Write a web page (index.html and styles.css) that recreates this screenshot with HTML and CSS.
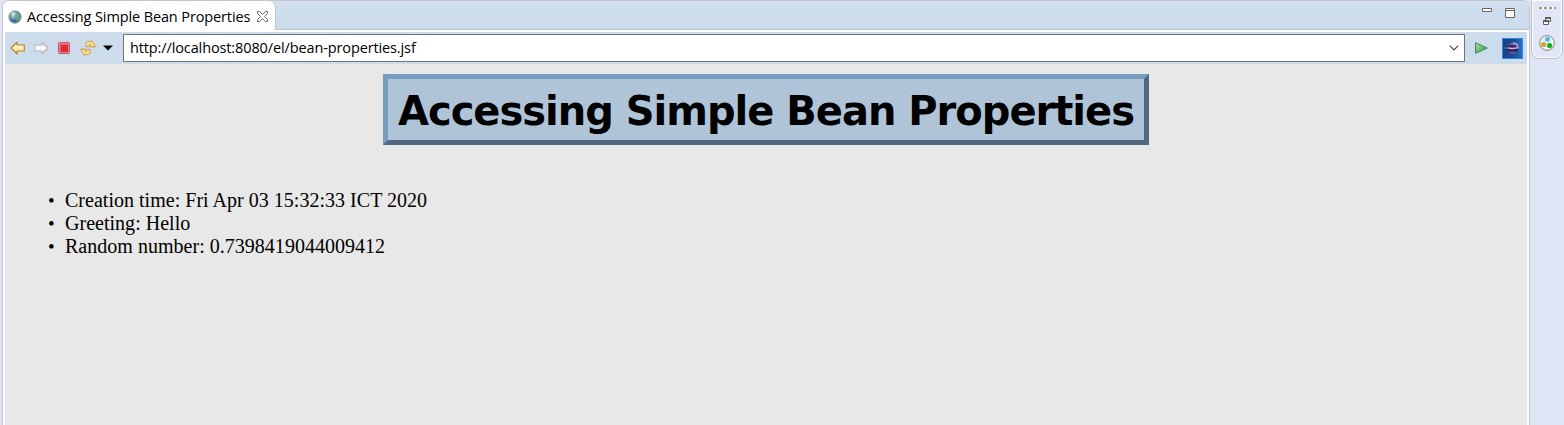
FILE: index.html
```html
<!DOCTYPE html>
<html lang="en">
<head>
<meta charset="utf-8">
<title>Accessing Simple Bean Properties</title>
<link rel="stylesheet" href="styles.css">
</head>
<body>
<div class="workbench">
  <main class="editor">
    <header class="tabs">
      <div class="tab">
        <svg class="globe" width="14" height="14" viewBox="0 0 14 14"><defs><radialGradient id="sea" cx=".35" cy=".3"><stop offset="0" stop-color="#d5ebf5"/><stop offset=".6" stop-color="#6ba3c4"/><stop offset="1" stop-color="#3b6c99"/></radialGradient></defs><circle cx="7" cy="7" r="6.2" fill="url(#sea)" stroke="#8795a3" stroke-width=".8"/><path d="M2 4 5 1.5l2 .5-1 2-2 1-1 3-2-1zM8 4l3-1 2 3-1 4-3 2-1-3-2-2z" fill="#78a678" opacity=".8"/><path d="m3 3 3-1 1 2-3 2z" fill="#e1f1ee" opacity=".7"/></svg>
        <span class="tab-title">Accessing Simple Bean Properties</span>
        <svg class="close" width="11" height="11" viewBox="0 0 11 11"><path d="M.5.5h2l3 3 3-3h2v2l-3 3 3 3v2h-2l-3-3-3 3h-2v-2l3-3-3-3z" fill="#fff" stroke="#6b6b6b"/></svg>
      </div>
      <div class="pane-actions">
        <svg width="10" height="4"><path d="M.5.5h9v3h-9z" fill="#fff" stroke="#6c6661"/></svg>
        <svg width="10" height="10"><path d="M.5.5h9v9h-9zM0 2.5h10" fill="#fff" stroke="#6c6661"/></svg>
      </div>
    </header>
    <nav class="toolbar">
      <svg class="back" width="16" height="14" viewBox="0 0 16 14"><defs><linearGradient id="gold" x2="0" y2="1"><stop stop-color="#fffbea"/><stop offset="1" stop-color="#ffe08a"/></linearGradient></defs><path d="M1 7 7 1.2V4h7.3v6H7v2.8z" fill="url(#gold)" stroke="#bd831f" stroke-width="1.2" stroke-linejoin="round"/></svg>
      <svg class="forward" width="16" height="14" viewBox="0 0 16 14"><path d="M15 7 9 1.2V4H1.7v6H9v2.8z" fill="#f7f7f5" stroke="#b5b7b9" stroke-width="1.2" stroke-linejoin="round"/></svg>
      <svg class="stop" width="12" height="12"><rect x=".5" y=".5" width="11" height="11" rx="1" fill="#ea7f88" stroke="#b85a70"/><rect x="2" y="2" width="8" height="8" fill="#e02b3a"/><path d="M2.500 10V2.500H10" fill="none" stroke="#ea5b66"/></svg>
      <svg class="refresh" width="16" height="16" viewBox="0 0 16 16"><g fill="#ffe08c" stroke="#c88b2b" stroke-width=".8" stroke-linejoin="round"><path id="swirl" d="M6 6.500C5 3 7.500.800 10.200 1.700L11.800.6l.5 1.700Q14.500 3.500 15.200 7L10 6.800l1.200-1.600Q8.500 3.700 8.500 6.500z"/><path d="M10 9.500C11 13 8.500 15.200 5.800 14.300L4.200 15.400l-.5-1.700Q1.500 12.500.8 9L6 9.200 4.800 10.800Q7.500 12.300 7.500 9.500z"/></g></svg>
      <svg class="drop" width="10" height="6"><path d="M0 .5h10L5 5.5z"/></svg>
      <div class="address">
        <span class="url">http://localhost:8080/el/bean-properties.jsf</span>
        <svg width="10" height="6" viewBox="0 0 10 6"><path d="m.7.7 4.3 4.3L9.3.7" fill="none" stroke="#444" stroke-width="1.1"/></svg>
      </div>
      <svg class="go" width="13" height="12" viewBox="0 0 13 12"><defs><linearGradient id="leaf" x2="1" y2="1"><stop stop-color="#b5dda8"/><stop offset="1" stop-color="#299a47"/></linearGradient></defs><path d="M.6.7 12.200 6 .6 11.3z" fill="url(#leaf)" stroke="#34894a"/></svg>
      <svg class="eclipse" width="21" height="21" viewBox="0 0 21 21"><defs><linearGradient id="night"><stop stop-color="#174080"/><stop offset=".6" stop-color="#1a4d9a"/><stop offset="1" stop-color="#2374ce"/></linearGradient><linearGradient id="planet" x2="0" y2="1"><stop stop-color="#8c79bd"/><stop offset=".35" stop-color="#2c205c"/><stop offset=".7" stop-color="#2c205c"/><stop offset="1" stop-color="#8068b0"/></linearGradient></defs><rect x=".5" y=".5" width="20" height="20" fill="url(#night)" stroke="#2e88df"/><circle cx="10.500" cy="10.300" r="5.500" fill="url(#planet)"/><path d="M1.500 10h17" stroke="#7479bb"/><path d="M6 9.800q4 1.500 9 0" fill="none" stroke="#cdb9e4" stroke-width="1.300"/><path d="M11 5.200q5.500 0 4.500 5" fill="none" stroke="#c8a8df" stroke-width="1.500"/></svg>
    </nav>
    <section class="page">
      <h1>Accessing Simple Bean Properties</h1>
      <ul>
        <li>Creation time: Fri Apr 03 15:32:33 ICT 2020</li>
        <li>Greeting: Hello</li>
        <li>Random number: 0.7398419044009412</li>
      </ul>
    </section>
  </main>
  <aside class="rail">
    <div class="trim">
      <svg width="18" height="3"><path d="M0 1h18" stroke="#fff" stroke-width="2"/><path d="M1 1h17" stroke="#9b968d" stroke-width="2" stroke-dasharray="3 2"/></svg>
      <svg class="restore" width="8" height="8"><path d="M2.5.5h5v4h-5zM.5 3.5h5v4h-5z" fill="#fff" stroke="#625d59"/><path d="M2 1h6M0 4h6" stroke="#625d59" stroke-width="2"/></svg>
      <svg class="palette" width="16" height="16"><circle cx="8" cy="8" r="7.4" fill="#f5f5ed" stroke="#85857f"/><circle cx="8.5" cy="4.3" r="2.5" fill="#50b9ed"/><circle cx="4.6" cy="9.5" r="2.6" fill="#d2a23d"/><circle cx="10.6" cy="10.5" r="2.6" fill="#08b51c"/></svg>
    </div>
  </aside>
</div>
</body>
</html>
```
FILE: styles.css
```css
* { box-sizing: border-box; }
body { margin: 0; background: #dfe5f5; font-family: "Open Sans", sans-serif; color: #000; }
svg { display: block; flex: none; }
.workbench { display: flex; width: 1564px; height: 425px; overflow: hidden; padding-left: 2px; }
.editor { width: 1528px; height: 426px; background: #fff; border: 1px solid #c5c5cd; border-radius: 7px 7px 0 0; padding: 0 2px; overflow: hidden; flex: none; }
.tabs { height: 29px; margin: 0 -2px; display: flex; justify-content: space-between; background: linear-gradient(#d1dfee, #cbdced); border-bottom: 1px solid #b8c3d3; }
.tab { width: 273px; height: 29px; display: flex; align-items: center; background: #fff; border-right: 1px solid #bdc5d2; border-top-right-radius: 7px; padding: 2px 0 0 5px; }
.tab-title { margin-left: 5px; width: 225px; font-size: 14.5px; letter-spacing: -.12px; line-height: 20px; white-space: nowrap; }
.close { margin-left: 5px; }
.pane-actions { display: flex; gap: 13px; padding: 7px 14px 0 0; }
.toolbar { display: flex; align-items: center; height: 32px; margin-top: 2px; background: #cddced; padding-left: 5px; }
.forward { margin-left: 7px; }
.stop { margin-left: 9px; }
.refresh { margin-left: 10px; }
.drop { margin-left: 7px; }
.address { display: flex; justify-content: space-between; align-items: center; width: 1342px; height: 28px; margin-left: 10px; background: #fff; border: 1px solid #747474; padding: 0 5px 0 6px; flex: none; }
.url { font-size: 14.5px; line-height: 20px; letter-spacing: -.12px; white-space: nowrap; }
.go { margin-left: 10px; }
.eclipse { margin-left: 14px; }
.page { height: 361px; background: #e8e8e8; overflow: hidden; }
h1 { width: 766px; height: 71px; margin: 10px auto 0; padding: 2px 0 0 10px; border: 5px solid; border-color: #769cbf #50677f #50677f #769cbf; background: #b0c4d8; font: bold 40px/61px "DejaVu Sans", sans-serif; letter-spacing: -1.01px; white-space: nowrap; }
ul { margin: 43px 0 0; padding: 1px 0 0 43px; list-style: none; font: 20px/23px "Liberation Serif", serif; letter-spacing: .02px; }
li { display: flex; }
li::before { content: "•"; width: 17px; font-size: 19px; }
.rail { width: 34px; padding-left: 1px; flex: none; }
.trim { width: 32px; height: 60px; margin-top: -1px; border: 1px solid #b9bfd0; border-radius: 0 0 8px 8px; background: #e2e7f7; box-shadow: inset 0 0 0 1px #fff; display: flex; flex-direction: column; align-items: center; padding-top: 7px; }
.restore { margin-top: 7px; }
.palette { margin-top: 10px; }
```
